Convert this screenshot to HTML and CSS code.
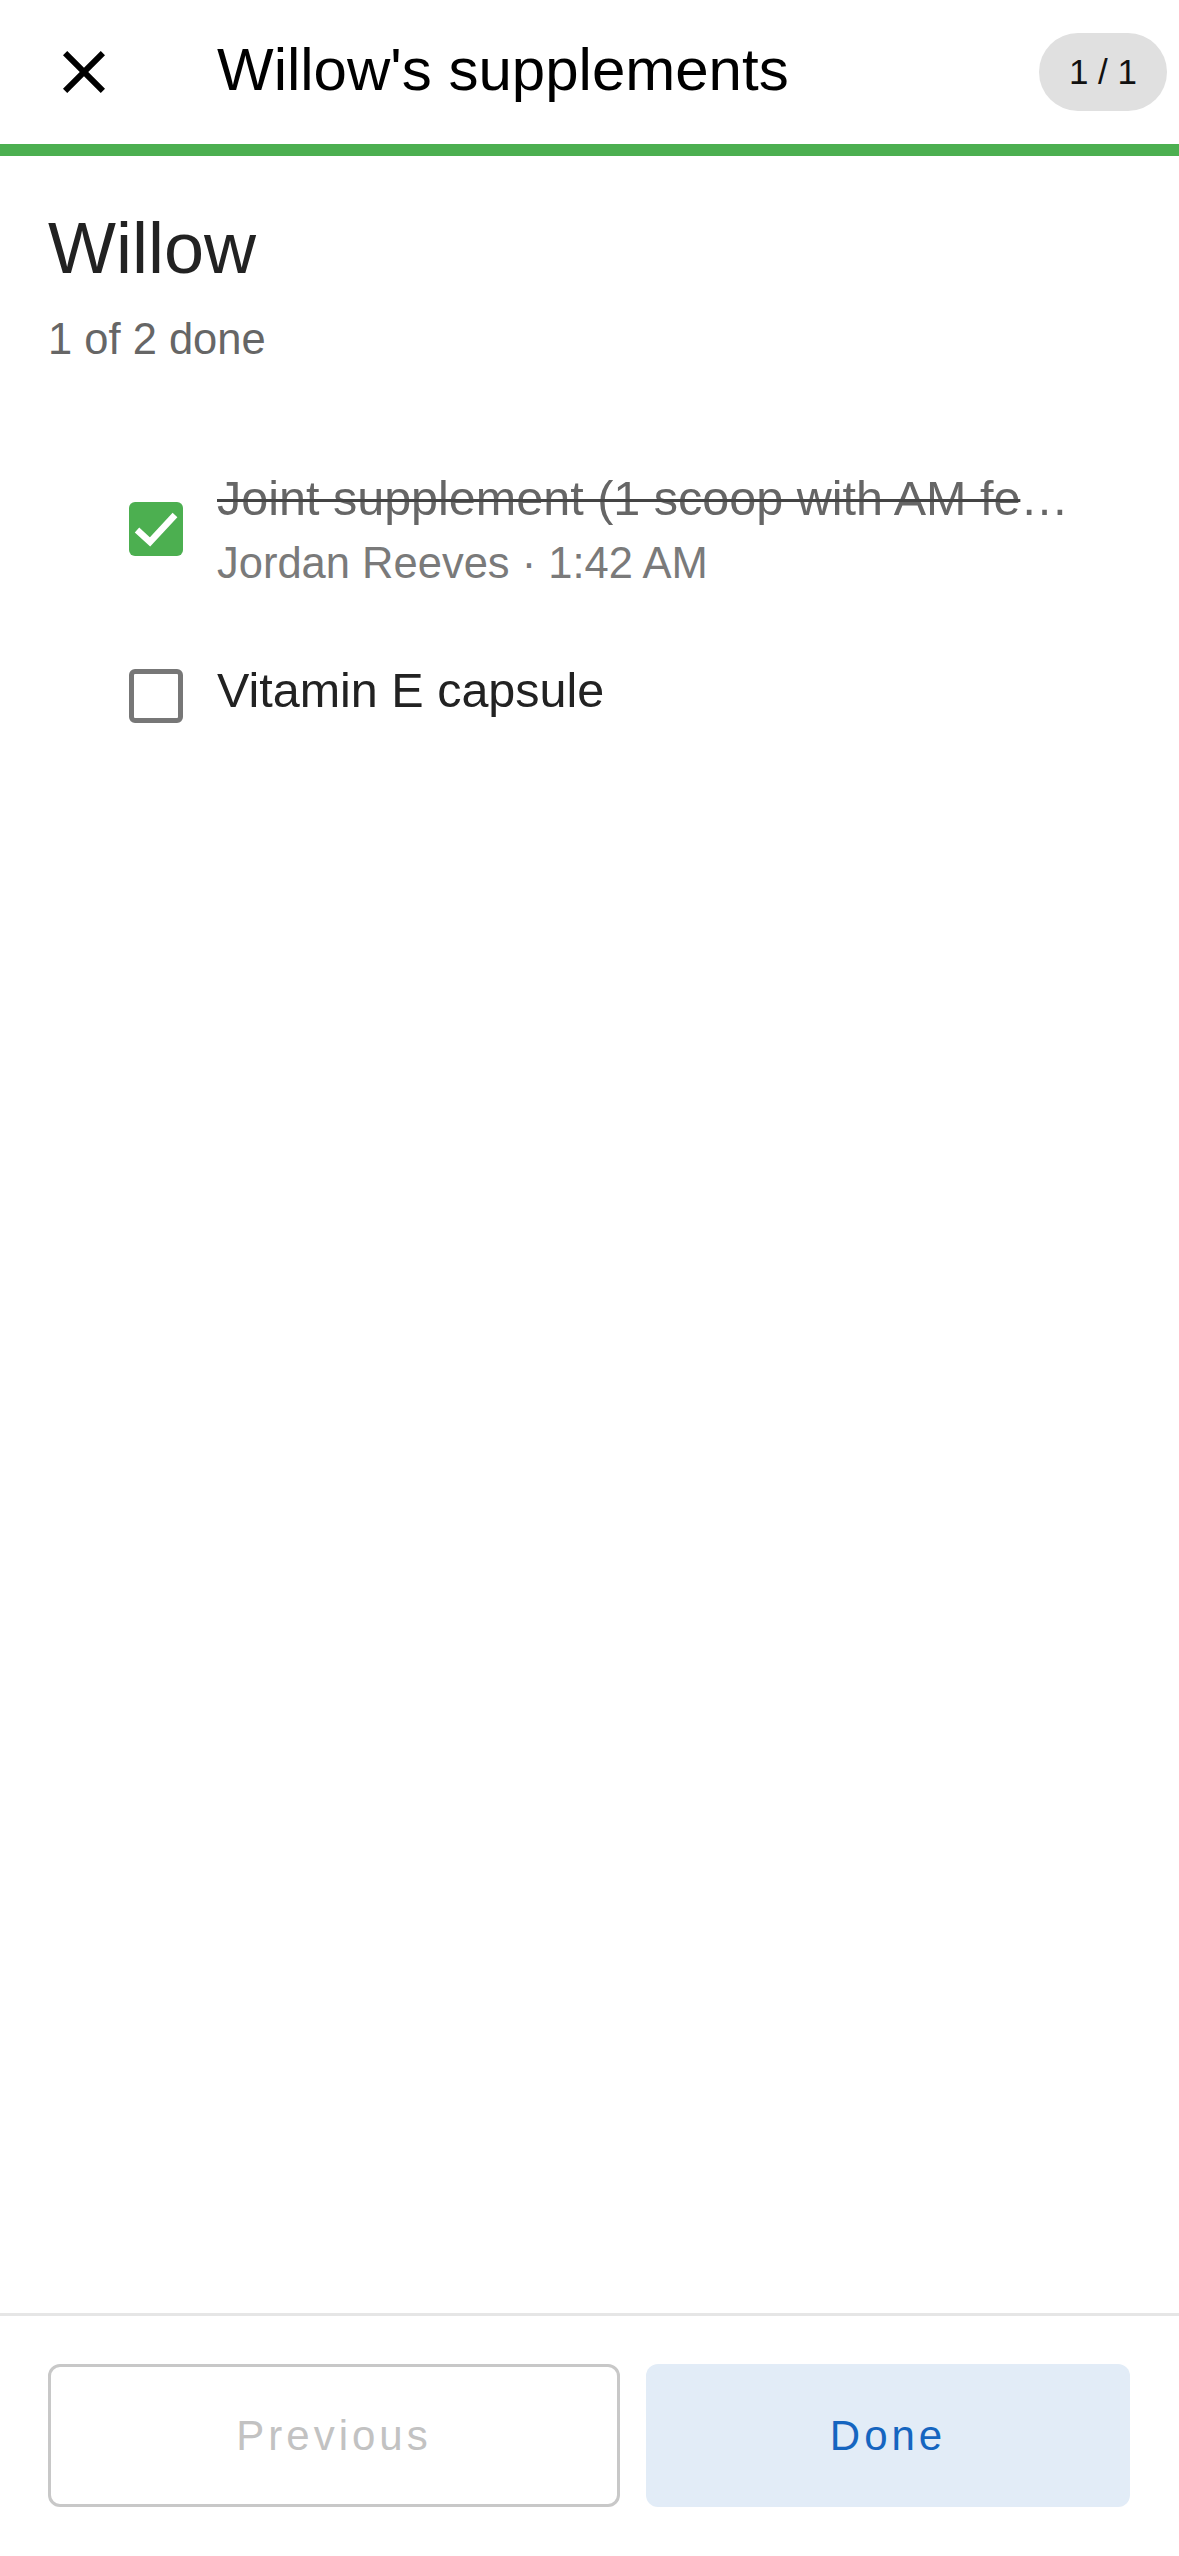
FILE: index.html
```html
<!DOCTYPE html>
<html lang="en">
<head>
    <meta charset="UTF-8"/>
    <meta name="viewport" content="width=device-width, initial-scale=1.0"/>
    <title>Willow's supplements</title>
    <link rel="stylesheet" href="styles.css">
</head>
<body>

<div class="screen">
    <div class="top_bar">
        <button class="close_button" aria-label="Close">
            <svg viewBox="0 0 24 24" width="72" height="72">
                <path d="M19 6.41L17.59 5 12 10.59 6.41 5 5 6.41 10.59 12 5 17.59 6.41 19 12 13.41 17.59 19 19 17.59 13.41 12z" fill="#000"/>
            </svg>
        </button>
        <div class="top_title">Willow's supplements</div>
        <div class="page_badge">1 / 1</div>
    </div>
    <div class="progress_track">
        <div class="progress_fill" style="width: 100%"></div>
    </div>

    <div class="content">
        <h1 class="pet_name">Willow</h1>
        <div class="done_count">1 of 2 done</div>

        <ul class="task_list">
            <li class="task_row">
                <span class="check_box checked">
                    <svg viewBox="0 0 54 54" width="54" height="54">
                        <polyline points="8,28 21,40 46,13" fill="none" stroke="#fff" stroke-width="6.5"/>
                    </svg>
                </span>
                <div class="task_text">
                    <div class="task_name done">Joint supplement (1 scoop with AM feed)</div>
                    <div class="task_meta">Jordan Reeves · 1:42 AM</div>
                </div>
            </li>
            <li class="task_row">
                <span class="check_box"></span>
                <div class="task_text single">
                    <div class="task_name">Vitamin E capsule</div>
                </div>
            </li>
        </ul>
    </div>

    <div class="bottom_bar">
        <button class="btn btn_previous" disabled>Previous</button>
        <button class="btn btn_done">Done</button>
    </div>
</div>

</body>
</html>
```

FILE: styles.css
```css
body {
    margin: 0;
    font-family: 'Liberation Sans', Arial, sans-serif;
    background: #fff;
}

.screen {
    display: flex;
    flex-direction: column;
    height: 2556px;
}

.top_bar {
    display: flex;
    align-items: center;
    height: 144px;
    padding: 0 12px 0 48px;
}

.close_button {
    display: flex;
    width: 72px;
    height: 72px;
    padding: 0;
    border: none;
    background: none;
}

.top_title {
    flex: 1;
    margin-left: 97px;
    padding-bottom: 4px;
    font-size: 60px;
    line-height: 72px;
    color: #000;
}

.page_badge {
    height: 78px;
    line-height: 78px;
    padding: 0 30px;
    border-radius: 39px;
    background: #e0e0e0;
    font-size: 35px;
    color: #111;
}

.progress_track {
    height: 12px;
    background: #e0e0e0;
}

.progress_fill {
    height: 100%;
    background: #4caf50;
}

.content {
    flex: 1;
    padding: 49px 48px 0 48px;
}

.pet_name {
    margin: 0;
    font-size: 72px;
    line-height: 86px;
    font-weight: normal;
    color: #222;
}

.done_count {
    margin-top: 18px;
    font-size: 43.5px;
    line-height: 60px;
    color: #666;
}

.task_list {
    list-style: none;
    margin: 96px 0 0 0;
    padding: 0 48px 0 81px;
    display: flex;
    flex-direction: column;
    gap: 64px;
}

.task_row {
    display: flex;
    align-items: center;
}

.check_box {
    flex: 0 0 auto;
    box-sizing: border-box;
    width: 54px;
    height: 54px;
    border: 5px solid #777;
    border-radius: 6px;
    background: #fff;
}

.check_box.checked {
    border: none;
    background: #4caf50;
}

.check_box svg {
    display: block;
}

.task_text {
    flex: 1;
    min-width: 0;
    margin-left: 34px;
}

.task_text.single {
    padding-bottom: 11px;
}

.task_name {
    font-size: 48.5px;
    line-height: 66px;
    color: #222;
    white-space: nowrap;
    overflow: hidden;
    text-overflow: ellipsis;
}

.task_name.done {
    color: #666;
    text-decoration: line-through;
    text-decoration-color: #444;
    text-decoration-thickness: 3px;
}

.task_meta {
    margin-top: 2px;
    font-size: 43.5px;
    line-height: 60px;
    color: #7a7a7a;
}

.bottom_bar {
    display: flex;
    gap: 26px;
    padding: 48px 49px 49px 48px;
    border-top: 3px solid #e6e6e6;
}

.btn {
    height: 143px;
    border-radius: 12px;
    font-family: 'Liberation Sans', Arial, sans-serif;
    font-size: 42px;
    letter-spacing: 4px;
}

.btn_previous {
    flex: 0 0 572px;
    border: 3px solid #c8c8c8;
    background: #fff;
    color: #c2c2c2;
}

.btn_done {
    flex: 1;
    border: none;
    background: #e2ecf7;
    color: #1565c0;
}
```
